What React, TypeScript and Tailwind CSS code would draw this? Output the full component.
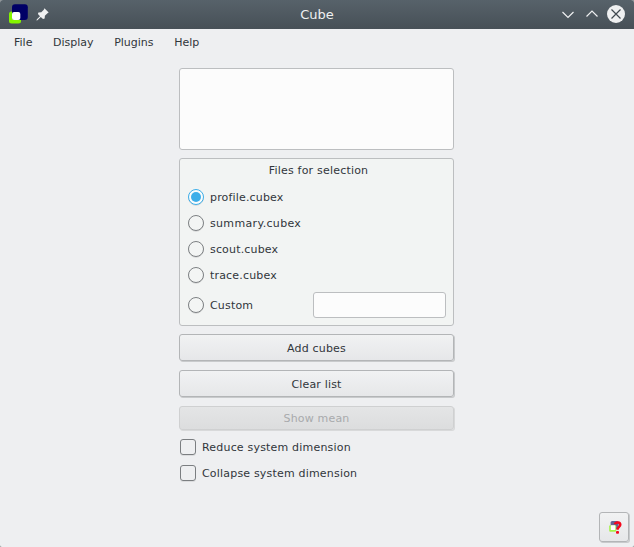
import { useState } from "react";

const FILES = [
  { name: "profile.cubex", tracking: "tracking-[0.17px]" },
  { name: "summary.cubex", tracking: "tracking-[0.33px]" },
  { name: "scout.cubex", tracking: "tracking-[0.17px]" },
  { name: "trace.cubex", tracking: "tracking-[0.17px]" },
];

function Radio({ label, checked, onSelect, tracking = "tracking-[0.17px]" }: { label: string; checked: boolean; onSelect: () => void; tracking?: string }) {
  return (
    <button type="button" role="radio" aria-checked={checked} onClick={onSelect} className="flex h-4 items-center gap-1.5">
      <svg width="16" height="17" viewBox="0 0 16 17" className="-mb-px shrink-0">
        <circle cx="8" cy="8.8" r="7.5" fill="none" stroke="#000" strokeOpacity="0.12" />
        <circle cx="8" cy="8" r="7.5" fill={checked ? "#fafcfc" : "#f3f5f4"} stroke={checked ? "#3daee9" : "#7d8083"} />
        {checked && <circle cx="8" cy="8" r="5" fill="#3daee9" />}
      </svg>
      <span className={`pt-0.5 ${tracking}`}>{label}</span>
    </button>
  );
}

function PushButton({ label, disabled = false }: { label: string; disabled?: boolean }) {
  return (
    <button
      type="button"
      disabled={disabled}
      className={
        disabled
          ? "flex h-6 w-full items-center justify-center rounded-[3px] border border-[#cfd0d1] bg-linear-to-b from-[#e4e5e6] to-[#dcddde] pt-0.5 tracking-[0.17px] text-[#a8aaac] shadow-[1px_1px_0_#d8d9da]"
          : "mb-px flex h-[27px] w-full items-center justify-center rounded-[3px] border border-[#b3b5b7] bg-linear-to-b from-[#f1f2f3] to-[#e6e7e9] pt-0.5 tracking-[0.17px] shadow-[1px_1px_0_#c8cacc]"
      }
    >
      {label}
    </button>
  );
}

function CheckBox({ label }: { label: string }) {
  const [on, setOn] = useState(false);
  return (
    <button type="button" role="checkbox" aria-checked={on} onClick={() => setOn(!on)} className="flex h-4 items-center gap-1.5">
      <span className="flex size-4 items-center justify-center rounded-[3px] border border-[#7b7e81] shadow-[0_1px_0_#dbdcde]">
        {on && <span className="size-2.5 bg-[#3daee9]" />}
      </span>
      <span className="pt-0.5 tracking-[0.19px]">{label}</span>
    </button>
  );
}

function TitleBar() {
  return (
    <header className="grid h-[29px] shrink-0 grid-cols-[1fr_auto_1fr] items-center rounded-t-[3px] bg-linear-to-b from-[#57626a] to-[#475057] text-[13px] text-[#eff0f1]">
      <div className="flex items-center pl-2">
        <svg width="20" height="21" viewBox="0 0 20 21">
          <rect x="1" y="7.5" width="12" height="12" rx="2.5" fill="#84f500" />
          <rect x="4" y="0.3" width="15.8" height="15.8" rx="3" fill="#000066" />
          <rect x="4" y="8" width="8.3" height="8" rx="2" fill="#fff" />
        </svg>
        <svg width="13" height="13" viewBox="0 0 12 12" className="ml-2 -mt-px" fill="#eff0f1">
          <path d="M7.8 0.3 11.7 4.2 10.6 4.9 8.2 7.2 8 9.8 6.5 10.1 4.4 8.2 1.3 11.2 0.4 11.6 0.8 10.4 3.7 7.5 1.8 5.6 2.2 4.2 4.9 4 7.2 1.5Z" />
        </svg>
      </div>
      <h1>Cube</h1>
      <div className="flex items-center justify-end pr-[9px]">
        <svg width="12" height="8" viewBox="0 0 12 8" fill="none" stroke="#eff0f1" strokeWidth="1.2">
          <path d="M0.5 1 6 6.5 11.5 1" />
        </svg>
        <svg width="12" height="8" viewBox="0 0 12 8" fill="none" stroke="#eff0f1" strokeWidth="1.2" className="ml-3 -mt-px">
          <path d="M0.5 6.5 6 1 11.5 6.5" />
        </svg>
        <svg width="18" height="18" viewBox="0 0 18 18" className="-mt-px ml-[9px]">
          <circle cx="9" cy="9" r="9" fill="#eff0f1" />
          <path d="M4.5 4.5 13.5 13.5M13.5 4.5 4.5 13.5" stroke="#3f484f" strokeWidth="1.2" />
        </svg>
      </div>
    </header>
  );
}

export default function App() {
  const [selected, setSelected] = useState("profile.cubex");
  return (
    <div className="h-[547px] w-[634px] bg-[#8f9496]">
      <div className="flex h-full flex-col rounded-t-[3px] rounded-b-[2px] bg-[#eeeff1] font-['DejaVu_Sans',sans-serif] text-[11px] leading-4 text-[#31363b]">
        <TitleBar />
        <nav className="flex h-[27px] shrink-0 items-center gap-[20.6px] px-3.5">
          <span>File</span>
          <span>Display</span>
          <span>Plugins</span>
          <span>Help</span>
        </nav>
        <main className="ml-[179px] mt-3 flex w-[275px] flex-col gap-2">
          <div className="h-[82px] rounded-[3px] border border-[#bcbec0] bg-[#fcfcfc]" />
          <section className="flex h-[168px] flex-col rounded-[3px] border border-[#bcbec0] bg-[#f2f4f3] px-2 pt-1">
            <h2 className="pl-1 text-center tracking-[0.2px]">Files for selection</h2>
            <div className="mt-2.5 flex flex-col gap-2.5">
              {FILES.map(({ name, tracking }) => (
                <Radio key={name} label={name} tracking={tracking} checked={selected === name} onSelect={() => setSelected(name)} />
              ))}
            </div>
            <div className="-mr-px mt-[9px] flex items-center justify-between">
              <Radio label="Custom" checked={selected === "custom"} onSelect={() => setSelected("custom")} />
              <input aria-label="Custom file" className="h-[26px] w-[133px] rounded-[3px] border border-[#bcbec0] bg-[#fcfcfc] px-1.5 outline-none" />
            </div>
          </section>
          <PushButton label="Add cubes" />
          <PushButton label="Clear list" />
          <PushButton label="Show mean" disabled />
          <div className="flex flex-col gap-2.5 pl-px pt-px">
            <CheckBox label="Reduce system dimension" />
            <CheckBox label="Collapse system dimension" />
          </div>
        </main>
        <footer className="mt-auto flex justify-end pb-[5px] pr-[5px]">
          <button type="button" aria-label="Help" className="flex size-[30px] items-center justify-center rounded-[3px] border border-[#b3b5b7] bg-linear-to-b from-[#f1f2f3] to-[#e6e7e9] shadow-[1px_1px_0_#c8cacc]">
            <svg width="16" height="16" viewBox="0 0 16 16">
              <rect x="4.6" y="2" width="8" height="8" rx="1.5" fill="#666594" />
              <rect x="3.2" y="6.2" width="7" height="6.6" rx="1" fill="#a5f24a" />
              <rect x="4.8" y="6.2" width="4.5" height="4.8" rx="0.5" fill="#fff" />
              <path d="M9 5.2C9.6 2.8 14.4 2.6 14.3 5.8 14.2 8 11.6 7.8 11.5 10.8" fill="none" stroke="#f5081c" strokeWidth="2.5" />
              <rect x="10" y="12" width="3" height="2.8" rx="1" fill="#f5081c" />
            </svg>
          </button>
        </footer>
      </div>
    </div>
  );
}
